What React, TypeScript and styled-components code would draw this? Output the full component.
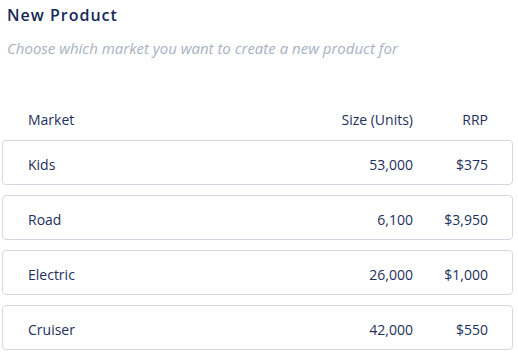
import React from 'react';
import styled, { createGlobalStyle } from 'styled-components';

const GlobalStyle = createGlobalStyle`
  body {
    margin: 0;
    background: #fff;
    font-family: 'Open Sans', 'Noto Sans', sans-serif;
  }
`;

interface Market {
  name: string;
  size: string;
  rrp: string;
}

const markets: Market[] = [
  { name: 'Kids', size: '53,000', rrp: '$375' },
  { name: 'Road', size: '6,100', rrp: '$3,950' },
  { name: 'Electric', size: '26,000', rrp: '$1,000' },
  { name: 'Cruiser', size: '42,000', rrp: '$550' },
];

const Page = styled.div`
  width: 511px;
  padding: 4px 0 0 2px;
`;

const Heading = styled.div`
  padding-left: 5px;
`;

const Title = styled.h1`
  margin: 0;
  font-size: 16px;
  font-weight: 600;
  line-height: 23px;
  letter-spacing: 1px;
  color: #172a57;
`;

const Subtitle = styled.p`
  margin: 11px 0 0;
  font-size: 15px;
  line-height: 20px;
  font-style: italic;
  color: #a9b1c2;
`;

const Table = styled.div`
  margin-top: 52px;
  display: flex;
  flex-direction: column;
  gap: 10px;
`;

const Columns = styled.div<{ $boxed?: boolean }>`
  display: grid;
  grid-template-columns: 1fr 120px 75px;
  align-items: center;
  font-size: 14px;
  line-height: 19px;
  color: #1e2f5c;
  padding: ${(p) => (p.$boxed ? '14px 24px 10px 25px' : '0 25px 1px 26px')};
  border: ${(p) => (p.$boxed ? '1px solid #d3d8e2' : 'none')};
  border-radius: 4px;
`;

const Cell = styled.span<{ $right?: boolean }>`
  text-align: ${(p) => (p.$right ? 'right' : 'left')};
`;

export default function App() {
  return (
    <>
      <GlobalStyle />
      <Page>
        <Heading>
          <Title>New Product</Title>
          <Subtitle>Choose which market you want to create a new product for</Subtitle>
        </Heading>
        <Table>
          <Columns>
            <Cell>Market</Cell>
            <Cell $right>Size (Units)</Cell>
            <Cell $right>RRP</Cell>
          </Columns>
          {markets.map((m) => (
            <Columns $boxed key={m.name}>
              <Cell>{m.name}</Cell>
              <Cell $right>{m.size}</Cell>
              <Cell $right>{m.rrp}</Cell>
            </Columns>
          ))}
        </Table>
      </Page>
    </>
  );
}
